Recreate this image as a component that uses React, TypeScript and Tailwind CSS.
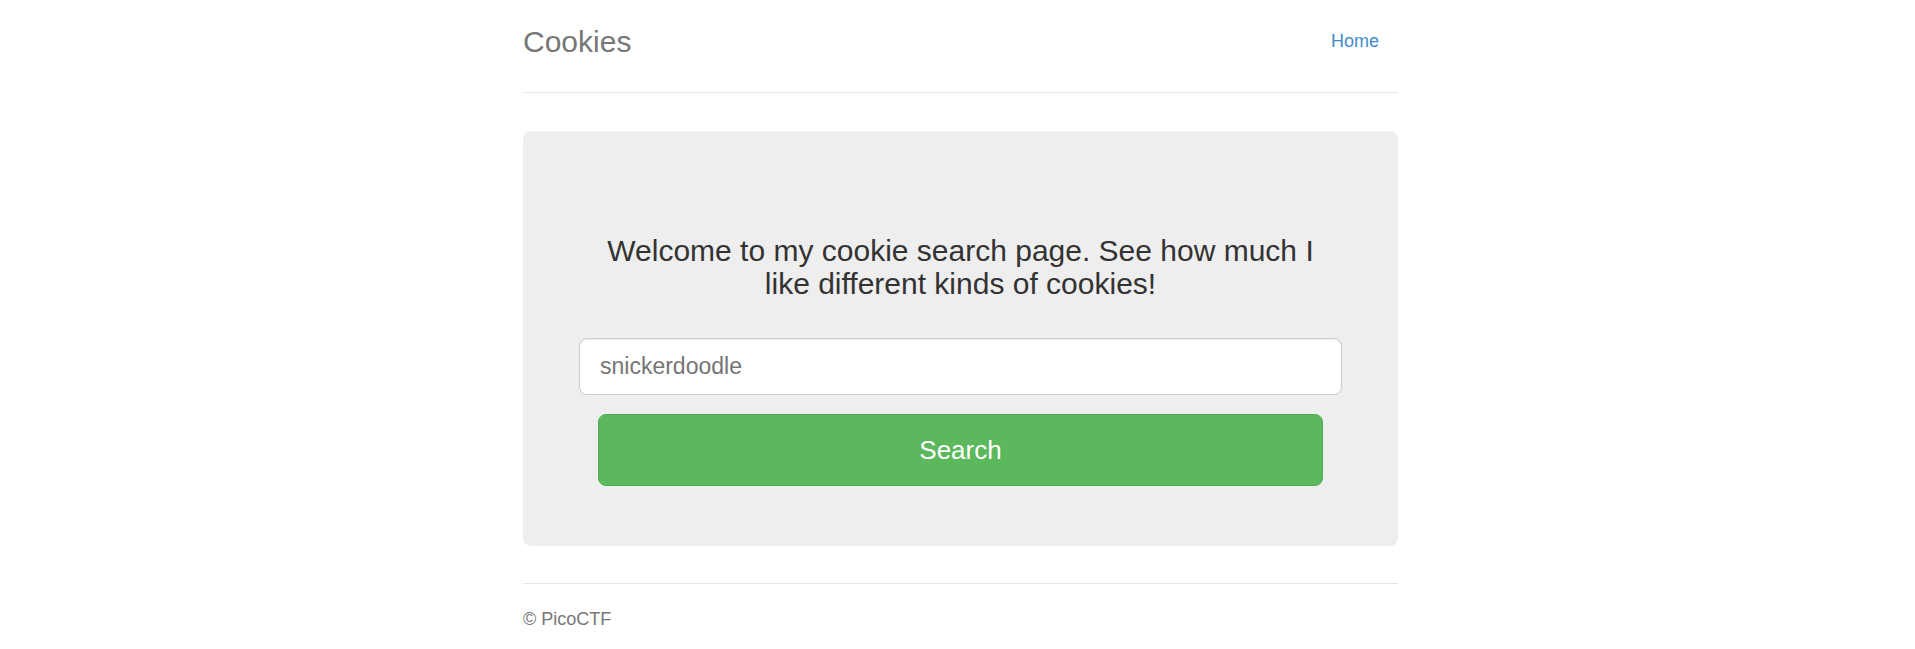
export default function App() {
  return (
    <div className="min-h-screen bg-white pl-1.5 font-['Liberation_Sans',Arial,sans-serif] text-[#333]">
      <div className="mx-auto max-w-[875px]">
        <header className="flex items-center justify-between border-b border-[#e5e5e5] pt-[25px] pb-[34px]">
          <h3 className="text-[30px] leading-[33px] text-[#777]">Cookies</h3>
          <nav className="pr-[19px]">
            <a href="/" className="text-[18px] leading-[25px] text-[#428bca] hover:underline">
              Home
            </a>
          </nav>
        </header>

        <main className="mt-[38px] rounded-lg bg-[#eee] px-14 pt-[103px] pb-[60px] text-center">
          <h3 className="px-[19px] text-[30px] leading-[33px]">
            <label htmlFor="name">
              Welcome to my cookie search page. See how much I like different kinds of cookies!
            </label>
          </h3>
          <form className="mt-[38px] flex flex-col gap-[19px]" onSubmit={(e) => e.preventDefault()}>
            <input
              id="name"
              name="name"
              type="text"
              placeholder="snickerdoodle"
              className="h-[57px] w-full rounded-lg border border-[#ccc] bg-white px-5 text-[23px] shadow-[inset_0_1px_1px_rgba(0,0,0,0.075)] placeholder:text-[#757575] placeholder:opacity-100"
            />
            <button
              type="submit"
              className="mx-[19px] h-[72px] rounded-lg border border-[#4cae4c] bg-[#5cb85c] text-[26px] text-white hover:bg-[#449d44]"
            >
              Search
            </button>
          </form>
        </main>

        <footer className="mt-[37px] border-t border-[#e5e5e5] pt-[23px] text-[#777]">
          <p className="text-[18px] leading-[25px]">© PicoCTF</p>
        </footer>
      </div>
    </div>
  );
}
